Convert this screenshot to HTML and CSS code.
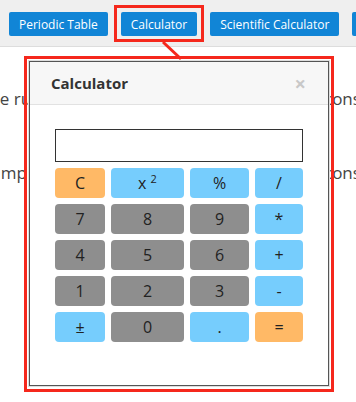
FILE: index.html
```html
<!DOCTYPE html>
<html lang="en">
<head>
  <meta charset="UTF-8">
  <title>Calculator</title>
  <link rel="stylesheet" href="styles.css">
</head>
<body>
  <div class="toolbar">
    <button class="btn">Periodic Table</button>
    <button class="btn">Calculator</button>
    <button class="btn">Scientific Calculator</button>
    <button class="btn">Unit Converter</button>
  </div>

  <p class="line first"><span class="lead">The rules</span><span>constants</span></p>
  <p class="line second"><span class="lead">Examples</span><span>constants</span></p>

  <div class="modal">
    <div class="modal-header">
      <h4>Calculator</h4>
      <span class="close">&times;</span>
    </div>
    <div class="modal-body">
      <input class="display" type="text">
      <div class="keys">
        <button class="key clear">C</button>
        <button class="key op">x <sup>2</sup></button>
        <button class="key op">%</button>
        <button class="key op">/</button>

        <button class="key num">7</button>
        <button class="key num">8</button>
        <button class="key num">9</button>
        <button class="key op">*</button>

        <button class="key num">4</button>
        <button class="key num">5</button>
        <button class="key num">6</button>
        <button class="key op">+</button>

        <button class="key num">1</button>
        <button class="key num">2</button>
        <button class="key num">3</button>
        <button class="key op">-</button>

        <button class="key op">&plusmn;</button>
        <button class="key num">0</button>
        <button class="key op">.</button>
        <button class="key clear">=</button>
      </div>
    </div>
  </div>

  <!-- annotation marks -->
  <div class="mark mark-btn"></div>
  <svg class="connector" width="30" height="30" viewBox="0 0 30 30">
    <line x1="2" y1="2" x2="20" y2="19" stroke="#f5281c" stroke-width="3"/>
  </svg>
  <div class="mark mark-modal"></div>
</body>
</html>
```

FILE: styles.css
```css
body {
  margin: 0;
  width: 356px;
  height: 402px;
  overflow: hidden;
  position: relative;
  font-family: "Open Sans", Arial, sans-serif;
  color: #444;
  background: #fff;
}

.toolbar {
  display: flex;
  gap: 13px;
  height: 47px;
  padding: 12px 0 0 9px;
  box-sizing: border-box;
  background: #efefef;
  border-bottom: 1px solid #ddd;
  white-space: nowrap;
  overflow: hidden;
}

.btn {
  flex: none;
  height: 24px;
  padding: 0 10px;
  border: none;
  border-radius: 2px;
  background: #1185d6;
  color: #fff;
  font-family: "Open Sans", Arial, sans-serif;
  font-size: 12px;
}

.line {
  display: flex;
  white-space: nowrap;
  font-size: 17px;
  line-height: 24px;
  margin: 0;
}

.line.first {
  margin: 40px 0 0 -20px;
}

.line.second {
  margin: 50px 0 0 -27px;
}

.line .lead {
  flex: none;
}

.first .lead {
  width: 344px;
}

.second .lead {
  width: 351px;
}

.modal {
  position: absolute;
  left: 29px;
  top: 61px;
  width: 300px;
  height: 325px;
  box-sizing: border-box;
  border: 1px solid #555;
  box-shadow: 0 0 0 1px #ddd;
  background: #fff;
}

.modal-header {
  display: flex;
  justify-content: space-between;
  align-items: center;
  height: 43px;
  box-sizing: border-box;
  padding: 0 22px 0 21px;
  background: #f7f7f7;
  border-bottom: 1px solid #e2e2e2;
}

.modal-header h4 {
  margin: 0;
  font-size: 15px;
  font-weight: bold;
  color: #333;
}

.close {
  font-size: 20px;
  font-weight: bold;
  color: #c8c8c8;
}

.modal-body {
  padding-top: 24px;
}

.display {
  display: block;
  width: 248px;
  height: 33px;
  margin: 0 auto;
  box-sizing: border-box;
  border: 1px solid #333;
}

.keys {
  display: grid;
  grid-template-columns: 50px 73px 59px 48px;
  grid-auto-rows: 30px;
  gap: 6px;
  width: 248px;
  margin: 6px auto 0;
}

.key {
  border: none;
  border-radius: 4px;
  padding: 0;
  font-family: "Open Sans", Arial, sans-serif;
  font-size: 16px;
  color: #222;
}

.key sup {
  font-size: 11px;
}

.num {
  background: #8e8e8e;
}

.op {
  background: #76cdfd;
}

.clear {
  background: #ffb966;
}

.mark {
  position: absolute;
  border: 3px solid #f5281c;
  box-sizing: border-box;
}

.mark-btn {
  left: 114px;
  top: 5px;
  width: 90px;
  height: 37px;
}

.mark-modal {
  left: 24px;
  top: 56px;
  width: 310px;
  height: 336px;
}

.connector {
  position: absolute;
  left: 161px;
  top: 40px;
}
```
